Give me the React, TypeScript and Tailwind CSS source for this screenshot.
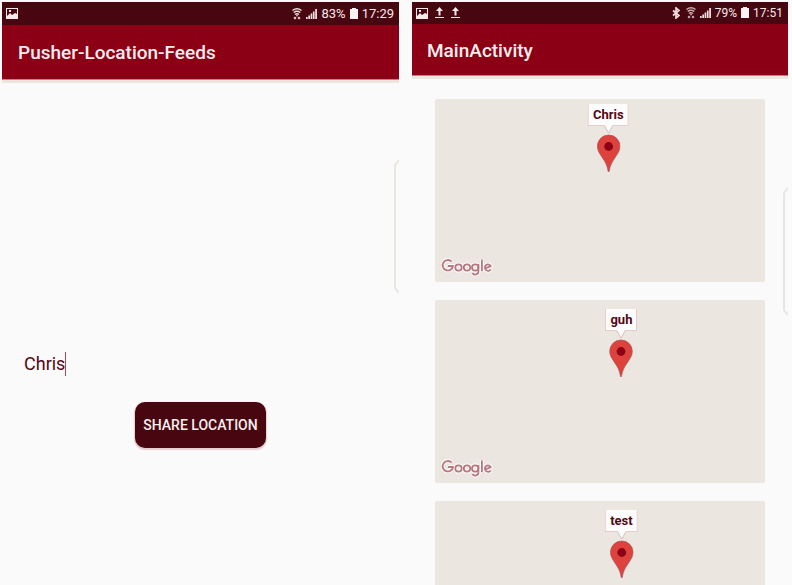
import type { ReactNode } from "react";

function PictureIcon() {
  return (
    <svg viewBox="0 0 12 11" className="h-[11px] w-3" aria-hidden="true">
      <path fill="#f7e9ea" fillRule="evenodd" d="M0 0h12v11H0zM1 1v7l3-3 2 2 3-2 2 1V1zM3 2h2v2H3z" />
    </svg>
  );
}

function UploadIcon() {
  return (
    <svg viewBox="0 0 9 12" className="h-3 w-[9px]" aria-hidden="true">
      <path fill="#f7e9ea" d="M4.500 0L8 4H5.500V8.500H3.500V4H1zM0 10h9v1H0z" />
    </svg>
  );
}

function BluetoothIcon() {
  return (
    <svg viewBox="0 0 8 12" className="mr-[2px] h-3 w-2" aria-hidden="true">
      <path fill="none" stroke="#f0dcde" strokeWidth="1.700" d="M1 3.500l6 5L4 11V1l3 2.500-6 5" />
    </svg>
  );
}

function WifiIcon({ dim = false }: { dim?: boolean }) {
  return (
    <svg viewBox="0 0 10 12" className={dim ? "h-3 w-[10px] opacity-80" : "h-3 w-[10px]"} aria-hidden="true">
      <path
        fill="none"
        stroke="#f0dcde"
        strokeWidth="1.500"
        d="M.5 2.500Q5-.8 9.500 2.500M1.700 4.500Q5 2 8.300 4.500M3 6.500Q5 5 7 6.500"
      />
      <path fill="#f0dcde" d="M4 7h2L5 9zM1.500 10L3 8.500 4.500 10 3 11.500zM5.500 10L7 8.500 8.500 10 7 11.500z" />
    </svg>
  );
}

function SignalIcon() {
  return (
    <svg viewBox="0 0 11 12" className="h-3 w-[11px]" aria-hidden="true">
      <path fill="#f0dcde" d="M0 9h1.700v2H0zM2.300 7.500H4V11H2.300zM4.600 5.500h1.700V11H4.600zM6.900 3.500h1.700V11H6.900zM9.200 1H11v10H9.200z" />
    </svg>
  );
}

function BatteryIcon() {
  return (
    <svg viewBox="0 0 8 12" className="h-3 w-2" aria-hidden="true">
      <path fill="#fbf3f3" d="M2 0h4v1h2v10H0V1h2z" />
    </svg>
  );
}

type StatusBarProps = {
  notices: ReactNode;
  signals: ReactNode;
  battery: string;
  time: string;
  className: string;
};

function StatusBar({ notices, signals, battery, time, className }: StatusBarProps) {
  return (
    <div className={`flex items-center justify-between bg-[#480610] pr-[5px] pl-1 leading-4 text-[#f7e9ea] ${className}`}>
      <div className="flex items-center gap-[7px]">{notices}</div>
      <div className="flex items-center gap-1">
        {signals}
        <SignalIcon />
        <span>{battery}</span>
        <BatteryIcon />
        <span>{time}</span>
      </div>
    </div>
  );
}

function EdgeHandle({ className }: { className: string }) {
  return (
    <svg
      viewBox="0 0 5 134"
      preserveAspectRatio="none"
      className={`absolute right-0 w-[5px] ${className}`}
      aria-hidden="true"
    >
      <path fill="none" stroke="#ebe5df" strokeWidth="2" d="M5 1L1 6v122l4 5" />
    </svg>
  );
}

function GoogleLogo() {
  return (
    <svg viewBox="0 0 52 20" className="absolute bottom-[5px] left-[6px] h-5 w-[52px]" role="img" aria-label="Google">
      {["#fafafa", "#b97880"].map((color) => (
        <g
          key={color}
          fill="none"
          stroke={color}
          strokeWidth={color === "#fafafa" ? 4 : 1.8}
          strokeLinejoin="round"
        >
          <path d="M10.500 4.500A5.200 5.200 0 1 0 12 9H7" />
          <circle cx="17.500" cy="10.500" r="3.200" />
          <circle cx="26" cy="10.500" r="3.200" />
          <circle cx="34.200" cy="10.500" r="3.200" />
          <path d="M37.400 7v7.500a3.200 3 0 0 1-6 1.500M40.900 2.500V14M44 11.500l5.800-2.300a3.100 3.200 0 1 0-.2 3.200" />
        </g>
      ))}
    </svg>
  );
}

function MapCard({ name, place }: { name: string; place: string }) {
  return (
    <li className="relative h-[183px] shrink-0 overflow-hidden rounded-xs bg-[#ece6e0]">
      <div className={`absolute flex -translate-x-1/2 flex-col items-center ${place}`}>
        <span className="border border-t-0 border-[#e5cdcb] bg-[#fdfcfc] px-1 text-[13px] leading-[21px] font-bold text-[#540713]">
          {name}
        </span>
        <svg viewBox="0 0 24 47" className="-mt-px h-[47px] w-6" aria-hidden="true">
          <path fill="#fdfcfc" d="M8 0h8l-4 8z" />
          <path fill="none" stroke="#d9a9ad" strokeWidth=".7" d="M8 1l4 7 4-7" />
          <path
            fill="#de423d"
            stroke="#a7565b"
            strokeWidth=".7"
            d="M12 10a11.300 11.300 0 0 1 11.300 11.300c0 4-2 7-4.500 10.700-3 4.500-5.500 8-6.300 14.500h-1c-.8-6.500-3.300-10-6.300-14.500C2.700 28.300.7 25.300.7 21.300A11.300 11.300 0 0 1 12 10z"
          />
          <circle cx="12" cy="21.500" r="4.400" fill="#8c0015" />
        </svg>
      </div>
      <GoogleLogo />
    </li>
  );
}

function ShareScreen() {
  return (
    <section className="relative">
      <StatusBar
        className="h-[23px] text-[13px]"
        notices={<PictureIcon />}
        signals={<WifiIcon />}
        battery="83%"
        time="17:29"
      />
      <header className="border-b border-[#c77e86] bg-[#8c0015] px-4 pt-[2px] shadow-[0_3px_0_#ede6df]">
        <h1 className="text-[19px] leading-[52px] font-medium text-[#f9eeee]">Pusher-Location-Feeds</h1>
      </header>
      <form className="flex flex-col items-center px-[22px] pt-[272px]" onSubmit={(event) => event.preventDefault()}>
        <div className="flex w-full items-center">
          <input
            aria-label="Name"
            defaultValue="Chris"
            className="field-sizing-content bg-transparent text-[18px] leading-6 text-[#540713] outline-none"
          />
          <span className="h-6 w-px bg-[#a04a55]" />
        </div>
        <button
          type="submit"
          className="mt-[26px] h-[46px] rounded-[10px] bg-[#480610] px-2 text-[14px] font-medium text-[#f9eeee] shadow-[0_1px_1px_1px_#e3cfcd]"
        >
          SHARE LOCATION
        </button>
      </form>
      <EdgeHandle className="top-[157px] h-[135px]" />
    </section>
  );
}

function FeedScreen() {
  return (
    <section className="relative">
      <StatusBar
        className="h-[22px] text-[12px]"
        notices={
          <>
            <PictureIcon />
            <UploadIcon />
            <UploadIcon />
          </>
        }
        signals={
          <>
            <BluetoothIcon />
            <WifiIcon dim />
          </>
        }
        battery="79%"
        time="17:51"
      />
      <header className="border-b border-[#c77e86] bg-[#8c0015] px-[15px] pt-[2px] shadow-[0_3px_0_#ede6df]">
        <h1 className="text-[19px] leading-[49px] font-medium text-[#f9eeee]">MainActivity</h1>
      </header>
      <ul className="flex flex-col gap-[18px] px-[23px] pt-[23px]">
        <MapCard name="Chris" place="top-[5px] left-[52.5%]" />
        <MapCard name="guh" place="top-[9px] left-[56.5%]" />
        <MapCard name="test" place="top-[9px] left-[56.5%]" />
      </ul>
      <EdgeHandle className="top-[185px] h-[129px]" />
    </section>
  );
}

export default function App() {
  return (
    <main className="grid h-screen grid-cols-[397fr_376fr] gap-[13px] overflow-hidden bg-[#fafafa] pt-[2px] pr-1 pl-[2px] font-[Roboto,sans-serif]">
      <ShareScreen />
      <FeedScreen />
    </main>
  );
}
